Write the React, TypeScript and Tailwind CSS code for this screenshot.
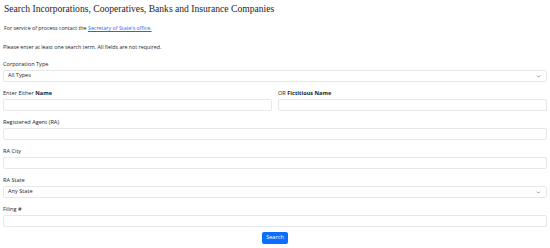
import { ChevronDown } from "lucide-react";

function Field({ label, select }: { label: React.ReactNode; select?: string }) {
  return (
    <div className="mb-[7px]">
      <label className="block h-[8px] leading-[8px] text-[5.6px] text-[#212529]">{label}</label>
      <div className="mt-[2px] h-[12px] rounded-[2px] border border-[#e6e8eb] bg-white flex items-center justify-between pl-[4px] pr-[5px]">
        {select && <span className="text-[5.6px] leading-none text-[#212529]">{select}</span>}
        {select && <ChevronDown className="w-[5px] h-[5px] text-[#343a40]" strokeWidth={2.5} />}
      </div>
    </div>
  );
}

export default function App() {
  return (
    <div className="w-[550px] h-[248px] bg-white px-[3px] font-['Open_Sans',sans-serif] text-[#212529]">
      <h1 className="pt-[3px] pl-[1px] font-['Liberation_Serif',serif] text-[9.6px] leading-[12px] text-[#212529]">
        Search Incorporations, Cooperatives, Banks and Insurance Companies
      </h1>
      <p className="mt-[9px] pl-[1px] text-[5.3px] leading-[8px]">
        For service of process contact the{" "}
        <a href="#" className="text-[#0d6efd] underline">Secretary of State's office.</a>
      </p>
      <p className="mt-[11px] text-[5.3px] leading-[8px] font-medium">
        Please enter at least one search term. All fields are not required.
      </p>

      <div className="mt-[9px]">
        <Field label="Corporation Type" select="All Types" />
        <div className="grid grid-cols-2 gap-[6px]">
          <Field label={<>Enter Either <b>Name</b></>} />
          <Field label={<>OR <b>Fictitious Name</b></>} />
        </div>
        <Field label="Registered Agent (RA)" />
        <Field label="RA City" />
        <Field label="RA State" select="Any State" />
        <Field label="Filing #" />
        <div className="flex justify-center -mt-[2px]">
          <button className="h-[12px] px-[4px] rounded-[2px] bg-[#0d6efd] text-white text-[5.6px] leading-none">
            Search
          </button>
        </div>
      </div>
    </div>
  );
}
